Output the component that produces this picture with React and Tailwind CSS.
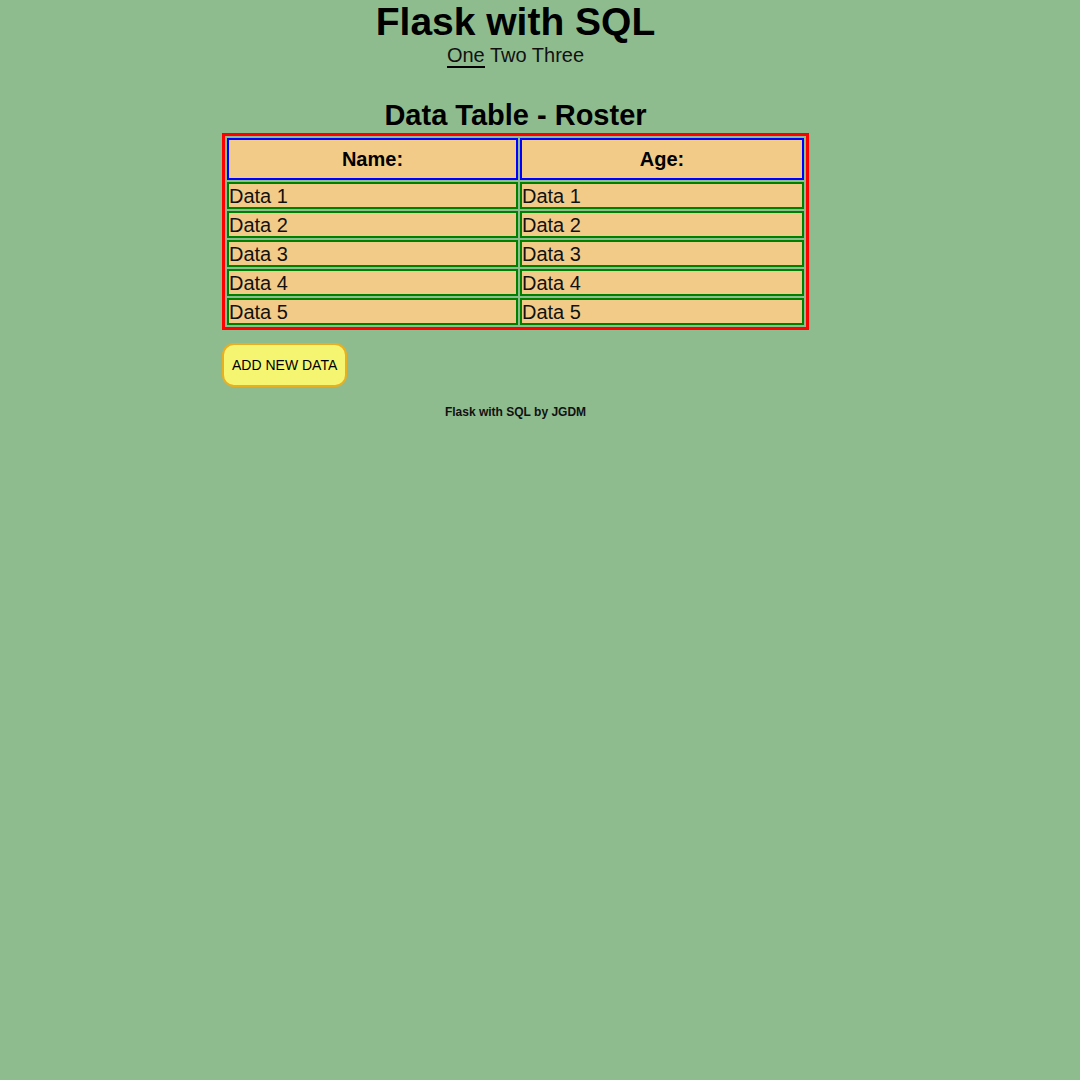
const rows = [1, 2, 3, 4, 5];

export default function App() {
    return (
        <div className="min-h-[1080px] w-full bg-[#8fbc8f] text-black" style={{ fontFamily: "Arial, 'Liberation Sans', sans-serif" }}>
            <div className="w-[1031px] flex flex-col items-center">
                {/* Header */}
                <h1 className="text-[39px] font-bold leading-[43px] mt-0">Flask with SQL</h1>
                <nav className="text-[20px] leading-[24px] text-[#111]">
                    <span className="border-b-2 border-black">One</span> Two Three
                </nav>

                {/* Table */}
                <div className="w-[587px] mt-[32px]">
                    <h2 className="text-[29px] font-bold leading-[33px] text-center">Data Table - Roster</h2>
                    <table className="w-[587px] border-[3px] border-[#ff0000] border-separate border-spacing-[2px] mt-[1px]">
                        <thead>
                            <tr>
                                <th className="w-[291px] h-[42px] border-2 border-[#0000ff] bg-[#f3cb89] text-[20px] font-bold">Name:</th>
                                <th className="w-[284px] h-[42px] border-2 border-[#0000ff] bg-[#f3cb89] text-[20px] font-bold">Age:</th>
                            </tr>
                        </thead>
                        <tbody>
                            {rows.map((n) => (
                                <tr key={n}>
                                    <td className="h-[27px] border-2 border-[#008000] bg-[#f3cb89] text-[20px] leading-[22px] p-0 text-[#111]">Data {n}</td>
                                    <td className="h-[27px] border-2 border-[#008000] bg-[#f3cb89] text-[20px] leading-[22px] p-0 text-[#111]">Data {n}</td>
                                </tr>
                            ))}
                        </tbody>
                    </table>

                    <button className="mt-[13px] h-[44px] px-[8px] rounded-[12px] border-2 border-[#e8b020] bg-[#f5f571] text-[14px]">
                        ADD NEW DATA
                    </button>
                </div>

                {/* Footer */}
                <p className="text-[12px] font-bold mt-[16px] text-[#111]">Flask with SQL by JGDM</p>
            </div>
        </div>
    );
}
